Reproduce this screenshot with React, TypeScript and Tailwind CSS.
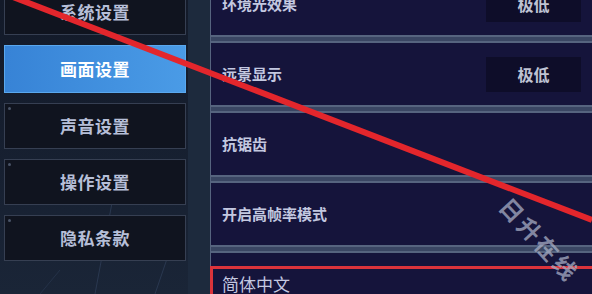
import React from 'react'

const font = { fontFamily: '"Noto Sans CJK SC", "Noto Sans", sans-serif' }

const menu = ['系统设置', '画面设置', '声音设置', '操作设置', '隐私条款']

interface Row {
  label: string
  value?: string
}

const rows: Row[] = [
  { label: '环境光效果', value: '极低' },
  { label: '远景显示', value: '极低' },
  { label: '抗锯齿' },
  { label: '开启高帧率模式' },
]

function SideButton({ label, active }: { label: string; active: boolean }) {
  if (active) {
    return (
      <div className="h-[48px] w-[182px] flex items-center justify-center bg-gradient-to-r from-[#3783d6] to-[#4a9be6] border border-[#5aa8ee]">
        <span className="text-[17px] font-bold text-white tracking-[0.5px]">{label}</span>
      </div>
    )
  }
  return (
    <div className="relative h-[46px] w-[182px] flex items-center justify-center bg-[#10141f] border border-[#363f52]">
      <span className="absolute left-[3px] top-[3px] w-[3px] h-[3px] rounded-full bg-[#4a5468]" />
      <span className="text-[17px] font-bold text-[#b6bfd8] tracking-[0.5px]">{label}</span>
    </div>
  )
}

function Separator() {
  return <div className="h-[8px] bg-[#3a4663] border-y-2 border-[#56647f]" />
}

function SettingRow({ row }: { row: Row }) {
  return (
    <div className="h-[62px] flex items-center justify-between pl-[11px] pr-[11px]">
      <span className="text-[15px] font-bold text-[#c3c8e0]">{row.label}</span>
      {row.value && (
        <div className="w-[95px] h-[35px] bg-[#0e0d29] flex items-center justify-center">
          <span className="text-[16px] font-bold text-[#bfc3d3]">{row.value}</span>
        </div>
      )}
    </div>
  )
}

export default function App() {
  return (
    <div className="relative w-[592px] h-[294px] overflow-hidden flex bg-[#15143b]" style={font}>
      {/* Menu lateral */}
      <div className="relative w-[210px] h-full flex bg-gradient-to-b from-[#131a29] to-[#1a2537]">
        <svg className="absolute inset-0" width="210" height="294">
          <line x1="120" y1="160" x2="95" y2="294" stroke="#2a3850" strokeWidth="1" />
          <line x1="170" y1="250" x2="155" y2="294" stroke="#2a3850" strokeWidth="1" />
          <line x1="60" y1="270" x2="40" y2="294" stroke="#243248" strokeWidth="1" />
        </svg>
        <div className="relative flex flex-col gap-[10px] ml-[4px] mt-[-11px]">
          {menu.map((m, i) => (
            <SideButton key={m} label={m} active={i === 1} />
          ))}
        </div>
        <div className="relative ml-auto w-[22px] h-full bg-[#1d2a3d]" />
      </div>

      {/* Panneau principal */}
      <div className="flex-1 h-full flex flex-col border-l border-[#56647f] bg-[#15143b]">
        <div className="flex flex-col mt-[-27px]">
          {rows.map(r => (
            <React.Fragment key={r.label}>
              <SettingRow row={r} />
              <Separator />
            </React.Fragment>
          ))}
        </div>
        <div className="mt-[13px] flex-1 border-t-[3px] border-l-[3px] border-[#dc333b] ml-[-1px] pl-[9px] pt-[2px]">
          <span className="text-[17px] text-[#c4c8e0]">简体中文</span>
        </div>
      </div>

      {/* Trait rouge */}
      <svg className="absolute inset-0 pointer-events-none" width="592" height="294">
        <line x1="0" y1="-8" x2="592" y2="220" stroke="#e3262c" strokeWidth="6" />
      </svg>

      {/* Filigrane */}
      <div className="absolute left-[488px] top-[222px] rotate-[47deg] origin-center text-[23px] font-bold tracking-[3px] text-[#a7adc4]/75 whitespace-nowrap">
        日升在线
      </div>
    </div>
  )
}
